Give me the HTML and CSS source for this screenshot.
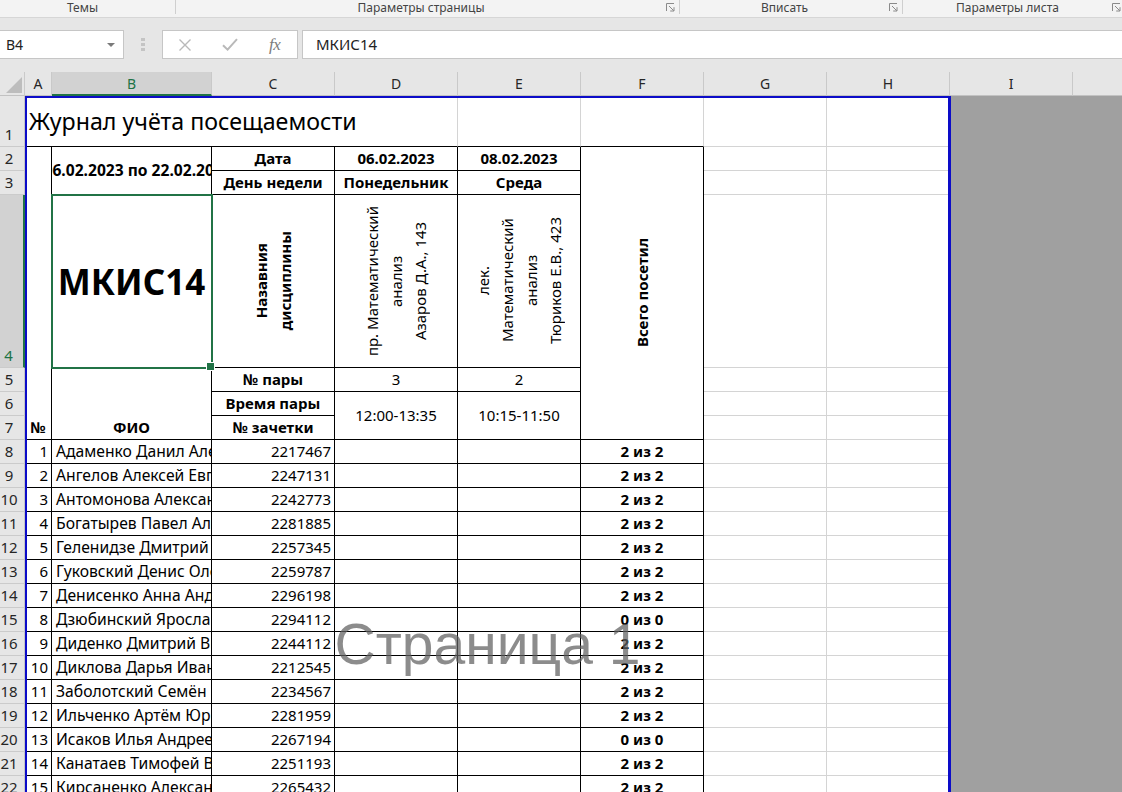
FILE: index.html
```html
<!DOCTYPE html>
<html lang="ru">
<head>
<meta charset="utf-8">
<title>Журнал учёта посещаемости</title>
<link rel="stylesheet" href="styles.css">
</head>
<body>
<div class="ribbon">
  <div class="grp g-themes"><span class="lbl">Темы</span></div>
  <div class="grp g-page"><span class="lbl">Параметры страницы</span><svg class="launch" width="9" height="9" viewBox="0 0 9 9"><path d="M0.5 8V0.5H8" fill="none" stroke="#8a8a8a"/><path d="M3 3l4.8 4.8M8 4.2V8H4.2" fill="none" stroke="#8a8a8a"/></svg></div>
  <div class="grp g-fit"><span class="lbl">Вписать</span><svg class="launch" width="9" height="9" viewBox="0 0 9 9"><path d="M0.5 8V0.5H8" fill="none" stroke="#8a8a8a"/><path d="M3 3l4.8 4.8M8 4.2V8H4.2" fill="none" stroke="#8a8a8a"/></svg></div>
  <div class="grp g-sheet"><span class="lbl">Параметры листа</span><svg class="launch" width="9" height="9" viewBox="0 0 9 9"><path d="M0.5 8V0.5H8" fill="none" stroke="#8a8a8a"/><path d="M3 3l4.8 4.8M8 4.2V8H4.2" fill="none" stroke="#8a8a8a"/></svg></div>
</div>

<div class="fbar">
  <div class="namebox"><span>B4</span><svg width="8" height="4" viewBox="0 0 8 4"><path d="M0 0H8L4 4Z" fill="#7a7a7a"/></svg></div>
  <div class="grip"><i></i><i></i><i></i></div>
  <div class="fbtns">
    <span class="slot"><svg width="14" height="14" viewBox="0 0 14 14"><path d="M1.5 1.5L12.5 12.5M12.5 1.5L1.5 12.5" stroke="#b9b9b9" stroke-width="1.4" fill="none"/></svg></span>
    <span class="slot"><svg width="16" height="13" viewBox="0 0 16 13"><path d="M1 7.2L5.6 11.6L15 1.2" stroke="#b9b9b9" stroke-width="2" fill="none"/></svg></span>
    <span class="slot fx">fx</span>
  </div>
  <div class="finput">МКИС14</div>
</div>

<div class="sheet">
  <!-- column headers -->
  <div class="corner k0 w0"><svg width="25" height="24" viewBox="0 0 25 24"><path d="M6 21H22V5Z" fill="#bdbdbd"/></svg></div>
  <div class="ch k1 w0">A</div>
  <div class="ch selc k2 w0">B</div>
  <div class="ch k3 w0">C</div>
  <div class="ch k4 w0">D</div>
  <div class="ch k5 w0">E</div>
  <div class="ch k6 w0">F</div>
  <div class="ch k7 w0">G</div>
  <div class="ch k8 w0">H</div>
  <div class="ch k9 w0">I</div>
  <div class="ch k10 w0"></div>

  <!-- row headers 1-7 -->
  <div class="rh k0 w1">1</div>
  <div class="rh k0 w2">2</div>
  <div class="rh k0 w3">3</div>
  <div class="rh selr k0 w4">4</div>
  <div class="rh k0 w5">5</div>
  <div class="rh k0 w6">6</div>
  <div class="rh k0 w7">7</div>

  <!-- outside print area -->
  <div class="out"></div>

  <!-- row 1 -->
  <div class="c title span-AD w1">Журнал учёта посещаемости</div>
  <div class="c bb k5 w1"></div>
  <div class="c bb k6 w1"></div>
  <div class="c k7 w1"></div>
  <div class="c k8 w1"></div>

  <!-- rows 2-7 header block -->
  <div class="c t b ctr vb k1 span-2-7">№</div>
  <div class="c t b ctr period k2 span-2-3">с 06.02.2023 по 22.02.2023</div>
  <div class="c t b ctr k3 w2">Дата</div>
  <div class="c t b ctr k4 w2">06.02.2023</div>
  <div class="c t b ctr k5 w2">08.02.2023</div>
  <div class="c t ctr k6 span-2-7"><div class="rot b">Всего посетил</div></div>
  <div class="c k7 w2"></div>
  <div class="c k8 w2"></div>

  <div class="c t b ctr k3 w3">День недели</div>
  <div class="c t b ctr k4 w3">Понедельник</div>
  <div class="c t b ctr k5 w3">Среда</div>
  <div class="c k7 w3"></div>
  <div class="c k8 w3"></div>

  <div class="c t ctr sel k2 w4">МКИС14</div>
  <div class="c t ctr k3 w4"><div class="rot b">Назавния<br>дисциплины</div></div>
  <div class="c t ctr k4 w4"><div class="rot">пр. Математический<br>анализ<br>Азаров Д.А., 143</div></div>
  <div class="c t ctr k5 w4"><div class="rot">лек.<br>Математический<br>анализ<br>Тюриков Е.В., 423</div></div>
  <div class="c k7 w4"></div>
  <div class="c k8 w4"></div>

  <div class="c t b ctr vb k2 span-5-7">ФИО</div>
  <div class="c t b ctr k3 w5">№ пары</div>
  <div class="c t ctr k4 w5">3</div>
  <div class="c t ctr k5 w5">2</div>
  <div class="c k7 w5"></div>
  <div class="c k8 w5"></div>

  <div class="c t b ctr k3 w6">Время пары</div>
  <div class="c t ctr k4 span-6-7">12:00-13:35</div>
  <div class="c t ctr k5 span-6-7">10:15-11:50</div>
  <div class="c k7 w6"></div>
  <div class="c k8 w6"></div>

  <div class="c t b ctr k3 w7">№ зачетки</div>
  <div class="c k7 w7"></div>
  <div class="c k8 w7"></div>

  <!-- data rows -->
  <div class="rh k0">8</div><div class="c t num k1">1</div><div class="c t nm k2">Адаменко Данил Александрович</div><div class="c t num k3">2217467</div><div class="c t k4"></div><div class="c t k5"></div><div class="c t b ctr k6">2 из 2</div><div class="c k7"></div><div class="c k8"></div>
  <div class="rh k0">9</div><div class="c t num k1">2</div><div class="c t nm k2">Ангелов Алексей Евгеньевич</div><div class="c t num k3">2247131</div><div class="c t k4"></div><div class="c t k5"></div><div class="c t b ctr k6">2 из 2</div><div class="c k7"></div><div class="c k8"></div>
  <div class="rh k0">10</div><div class="c t num k1">3</div><div class="c t nm k2">Антомонова Александра Сергеевна</div><div class="c t num k3">2242773</div><div class="c t k4"></div><div class="c t k5"></div><div class="c t b ctr k6">2 из 2</div><div class="c k7"></div><div class="c k8"></div>
  <div class="rh k0">11</div><div class="c t num k1">4</div><div class="c t nm k2">Богатырев Павел Алексеевич</div><div class="c t num k3">2281885</div><div class="c t k4"></div><div class="c t k5"></div><div class="c t b ctr k6">2 из 2</div><div class="c k7"></div><div class="c k8"></div>
  <div class="rh k0">12</div><div class="c t num k1">5</div><div class="c t nm k2">Геленидзе Дмитрий Романович</div><div class="c t num k3">2257345</div><div class="c t k4"></div><div class="c t k5"></div><div class="c t b ctr k6">2 из 2</div><div class="c k7"></div><div class="c k8"></div>
  <div class="rh k0">13</div><div class="c t num k1">6</div><div class="c t nm k2">Гуковский Денис Олегович</div><div class="c t num k3">2259787</div><div class="c t k4"></div><div class="c t k5"></div><div class="c t b ctr k6">2 из 2</div><div class="c k7"></div><div class="c k8"></div>
  <div class="rh k0">14</div><div class="c t num k1">7</div><div class="c t nm k2">Денисенко Анна Андреевна</div><div class="c t num k3">2296198</div><div class="c t k4"></div><div class="c t k5"></div><div class="c t b ctr k6">2 из 2</div><div class="c k7"></div><div class="c k8"></div>
  <div class="rh k0">15</div><div class="c t num k1">8</div><div class="c t nm k2">Дзюбинский Ярослав Игоревич</div><div class="c t num k3">2294112</div><div class="c t k4"></div><div class="c t k5"></div><div class="c t b ctr k6">0 из 0</div><div class="c k7"></div><div class="c k8"></div>
  <div class="rh k0">16</div><div class="c t num k1">9</div><div class="c t nm k2">Диденко Дмитрий Викторович</div><div class="c t num k3">2244112</div><div class="c t k4"></div><div class="c t k5"></div><div class="c t b ctr k6">2 из 2</div><div class="c k7"></div><div class="c k8"></div>
  <div class="rh k0">17</div><div class="c t num k1">10</div><div class="c t nm k2">Диклова Дарья Ивановна</div><div class="c t num k3">2212545</div><div class="c t k4"></div><div class="c t k5"></div><div class="c t b ctr k6">2 из 2</div><div class="c k7"></div><div class="c k8"></div>
  <div class="rh k0">18</div><div class="c t num k1">11</div><div class="c t nm k2">Заболотский Семён Павлович</div><div class="c t num k3">2234567</div><div class="c t k4"></div><div class="c t k5"></div><div class="c t b ctr k6">2 из 2</div><div class="c k7"></div><div class="c k8"></div>
  <div class="rh k0">19</div><div class="c t num k1">12</div><div class="c t nm k2">Ильченко Артём Юрьевич</div><div class="c t num k3">2281959</div><div class="c t k4"></div><div class="c t k5"></div><div class="c t b ctr k6">2 из 2</div><div class="c k7"></div><div class="c k8"></div>
  <div class="rh k0">20</div><div class="c t num k1">13</div><div class="c t nm k2">Исаков Илья Андреевич</div><div class="c t num k3">2267194</div><div class="c t k4"></div><div class="c t k5"></div><div class="c t b ctr k6">0 из 0</div><div class="c k7"></div><div class="c k8"></div>
  <div class="rh k0">21</div><div class="c t num k1">14</div><div class="c t nm k2">Канатаев Тимофей Витальевич</div><div class="c t num k3">2251193</div><div class="c t k4"></div><div class="c t k5"></div><div class="c t b ctr k6">2 из 2</div><div class="c k7"></div><div class="c k8"></div>
  <div class="rh k0">22</div><div class="c t num k1">15</div><div class="c t nm k2">Кирсаненко Александр Олегович</div><div class="c t num k3">2265432</div><div class="c t k4"></div><div class="c t k5"></div><div class="c t b ctr k6">2 из 2</div><div class="c k7"></div><div class="c k8"></div>

  <!-- overlays -->
  <div class="frame"></div>
  <div class="watermark">Страница 1</div>
</div>
</body>
</html>
```

FILE: styles.css
```css
* { box-sizing: border-box; margin: 0; padding: 0; }
html, body { width: 1122px; height: 792px; overflow: hidden; background: #fff; }
body { font-family: "Noto Sans", "Open Sans", sans-serif; color: #000; }

/* ribbon group labels */
.ribbon { display: flex; align-items: flex-start; height: 18px; background: #f3f3f3; border-bottom: 1px solid #d6d6d6; font-size: 12px; color: #444; overflow: hidden; }
.grp { display: flex; align-items: center; height: 14px; flex: none; }
.grp .lbl { flex: 1; text-align: center; line-height: 16px; margin-top: 1px; white-space: nowrap; }
.g-themes { width: 176px; border-right: 1px solid #cfcfcf; padding-right: 10px; }
.g-page { width: 504px; border-right: 1px solid #cfcfcf; padding-right: 4px; }
.g-fit { width: 223px; border-right: 1px solid #cfcfcf; padding-right: 4px; }
.g-sheet { width: 222px; padding-right: 4px; }
.launch { flex: none; margin-top: 1px; }

/* formula bar */
.fbar { display: flex; align-items: flex-start; height: 54px; padding-top: 12px; background: #e6e6e6; }
.namebox { width: 125px; height: 29px; margin-left: -1px; background: #fff; border: 1px solid #c6c6c6; display: flex; align-items: center; justify-content: space-between; padding: 0 8px 0 6px; font-size: 14px; color: #222; }
.grip { width: 38px; height: 29px; display: flex; flex-direction: column; align-items: center; justify-content: center; gap: 2px; }
.grip i { display: block; width: 4px; height: 3px; background: #c4c4c4; }
.fbtns { width: 136px; height: 29px; background: #fff; border: 1px solid #c6c6c6; display: flex; align-items: center; }
.slot { width: 45px; display: flex; justify-content: center; align-items: center; }
.fx { font-family: "Liberation Serif", serif; font-style: italic; font-size: 17px; color: #7c7c7c; letter-spacing: -0.5px; }
.finput { flex: 1; margin-left: 4px; height: 29px; background: #fff; border: 1px solid #c6c6c6; border-right: none; padding-left: 13px; font-size: 15px; line-height: 27px; color: #222; }

/* sheet grid */
.sheet { position: relative; display: grid; grid-template-columns: 25px 27px 160px repeat(8, 123px); grid-template-rows: 24px 51px 24px 24px 173px repeat(18, 24px); height: 720px; overflow: hidden; font-size: 15px; line-height: 23px; }

.k0 { grid-column: 1; } .k1 { grid-column: 2; } .k2 { grid-column: 3; } .k3 { grid-column: 4; }
.k4 { grid-column: 5; } .k5 { grid-column: 6; } .k6 { grid-column: 7; } .k7 { grid-column: 8; }
.k8 { grid-column: 9; } .k9 { grid-column: 10; } .k10 { grid-column: 11; }
.w0 { grid-row: 1; } .w1 { grid-row: 2; } .w2 { grid-row: 3; } .w3 { grid-row: 4; }
.w4 { grid-row: 5; } .w5 { grid-row: 6; } .w6 { grid-row: 7; } .w7 { grid-row: 8; }
.span-AD { grid-column: 2 / 6; grid-row: 2; }
.span-2-7 { grid-row: 3 / 9; }
.span-2-3 { grid-row: 3 / 5; }
.span-5-7 { grid-row: 6 / 9; }
.span-6-7 { grid-row: 7 / 9; }

.corner { background: #e6e6e6; border-right: 1px solid #cacaca; border-bottom: 1px solid #c2c2c2; }
.corner svg { display: block; }
.ch { background: #e6e6e6; border-right: 1px solid #c9c9c9; border-bottom: 1px solid #c2c2c2; display: flex; align-items: center; justify-content: center; font-size: 14px; color: #262626; }
.ch.selc { background: #d2d2d2; color: #217346; border-bottom: 2px solid #217346; }
.rh { background: #e6e6e6; border-right: 1px solid #c6c6c6; border-bottom: 1px solid #cbcbcb; display: flex; align-items: flex-end; justify-content: center; padding-right: 6px; font-size: 15px; line-height: 23px; color: #262626; }
.rh.selr { background: #d2d2d2; color: #217346; border-right: 2px solid #217346; }

.out { grid-column: 10 / 12; grid-row: 2 / 24; background: #a0a0a0; }

.c { display: flex; align-items: center; overflow: hidden; white-space: nowrap; min-width: 0; border-right: 1px solid #d4d4d4; border-bottom: 1px solid #d4d4d4; }
.t { border-right-color: #000; border-bottom-color: #000; }
.bb { border-bottom-color: #000; }
.b { font-weight: 700; }
.ctr { justify-content: center; }
.vb { align-items: flex-end; }
.num { justify-content: flex-end; padding-right: 3px; }
.nm { padding-left: 4px; font-size: 15.7px; }
.period { font-size: 15.6px; }

.title { font-size: 23.2px; line-height: 32px; align-items: flex-end; padding: 0 0 9px 4px; border-right-color: #d4d4d4; border-bottom-color: #000; }

.rot { writing-mode: vertical-rl; transform: rotate(180deg); text-align: center; line-height: 24px; white-space: nowrap; }

.sel { position: relative; z-index: 2; overflow: visible; outline: 2px solid #217346; outline-offset: -1px; font-size: 35px; font-weight: 700; }
.sel::after { content: ""; position: absolute; right: -4px; bottom: -4px; width: 7px; height: 7px; background: #217346; border: 1px solid #fff; }

/* page-break preview overlays */
.frame { position: absolute; left: 25px; top: 24px; width: 926px; height: 720px; border-left: 2px solid #0c0cc8; border-top: 2px solid #0c0cc8; border-right: 3px solid #0c0cc8; pointer-events: none; z-index: 4; }
.watermark { position: absolute; left: 25px; width: 925px; top: 536px; height: 72px; display: flex; align-items: center; justify-content: center; font-family: "Liberation Sans", Arial, sans-serif; font-size: 57px; line-height: 72px; color: rgba(96, 96, 96, 0.72); pointer-events: none; z-index: 5; }
```
